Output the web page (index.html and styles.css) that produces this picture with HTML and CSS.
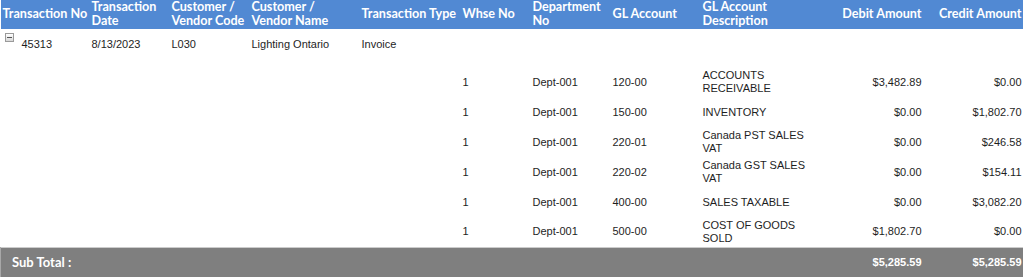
FILE: index.html
```html
<!DOCTYPE html>
<html>
<head>
<meta charset="utf-8">
<link rel="stylesheet" href="styles.css">
</head>
<body>
<table class="grid">
  <colgroup>
    <col class="c1"><col class="c2"><col class="c3"><col class="c4"><col class="c5"><col class="c6"><col class="c7"><col class="c8"><col class="c9"><col class="c10"><col class="c11">
  </colgroup>
  <thead>
    <tr class="head">
      <th><div class="hc">Transaction No</div></th>
      <th><div class="hc">Transaction<br>Date</div></th>
      <th><div class="hc">Customer /<br>Vendor Code</div></th>
      <th><div class="hc">Customer /<br>Vendor Name</div></th>
      <th><div class="hc">Transaction Type</div></th>
      <th><div class="hc">Whse No</div></th>
      <th><div class="hc">Department<br>No</div></th>
      <th><div class="hc">GL Account</div></th>
      <th><div class="hc">GL Account<br>Description</div></th>
      <th class="num"><div class="hc">Debit Amount</div></th>
      <th class="num"><div class="hc">Credit Amount</div></th>
    </tr>
  </thead>
  <tbody>
    <tr class="main">
      <td class="first"><span class="toggle"></span>45313</td>
      <td>8/13/2023</td>
      <td>L030</td>
      <td>Lighting Ontario</td>
      <td>Invoice</td>
      <td></td><td></td><td></td><td></td><td></td><td></td>
    </tr>
    <tr class="det">
      <td></td><td></td><td></td><td></td><td></td>
      <td>1</td><td>Dept-001</td><td>120-00</td><td>ACCOUNTS RECEIVABLE</td>
      <td class="num">$3,482.89</td><td class="num">$0.00</td>
    </tr>
    <tr class="det">
      <td></td><td></td><td></td><td></td><td></td>
      <td>1</td><td>Dept-001</td><td>150-00</td><td>INVENTORY</td>
      <td class="num">$0.00</td><td class="num">$1,802.70</td>
    </tr>
    <tr class="det">
      <td></td><td></td><td></td><td></td><td></td>
      <td>1</td><td>Dept-001</td><td>220-01</td><td>Canada PST SALES VAT</td>
      <td class="num">$0.00</td><td class="num">$246.58</td>
    </tr>
    <tr class="det">
      <td></td><td></td><td></td><td></td><td></td>
      <td>1</td><td>Dept-001</td><td>220-02</td><td>Canada GST SALES VAT</td>
      <td class="num">$0.00</td><td class="num">$154.11</td>
    </tr>
    <tr class="det">
      <td></td><td></td><td></td><td></td><td></td>
      <td>1</td><td>Dept-001</td><td>400-00</td><td>SALES TAXABLE</td>
      <td class="num">$0.00</td><td class="num">$3,082.20</td>
    </tr>
    <tr class="det">
      <td></td><td></td><td></td><td></td><td></td>
      <td>1</td><td>Dept-001</td><td>500-00</td><td>COST OF GOODS SOLD</td>
      <td class="num">$1,802.70</td><td class="num">$0.00</td>
    </tr>
  </tbody>
  <tfoot>
    <tr class="sub">
      <td colspan="9" class="sublabel">Sub Total :</td>
      <td class="num">$5,285.59</td>
      <td class="num">$5,285.59</td>
    </tr>
  </tfoot>
</table>
</body>
</html>
```

FILE: styles.css
```css
html, body {
  margin: 0;
  padding: 0;
  background: #ffffff;
}
.grid {
  width: 1022px;
  border-collapse: collapse;
  table-layout: fixed;
  font-family: "Liberation Sans", Arial, sans-serif;
  font-size: 11px;
  color: #1e1e1e;
}
.c1 { width: 89px; }
.c2 { width: 80px; }
.c3 { width: 80px; }
.c4 { width: 110px; }
.c5 { width: 101px; }
.c6 { width: 70px; }
.c7 { width: 80px; }
.c8 { width: 90px; }
.c9 { width: 120px; }
.c10 { width: 102px; }
.c11 { width: 100px; }

.head th {
  background: #5189d3;
  color: #ffffff;
  font-family: Lato, "Open Sans", sans-serif;
  font-weight: 700;
  font-size: 12.6px;
  line-height: 14.5px;
  text-align: left;
  padding: 0 1px 0 2px;
  vertical-align: top;
  white-space: nowrap;
}
.hc {
  height: 29px;
  box-sizing: border-box;
  padding-bottom: 1px;
  display: flex;
  align-items: center;
}
.head th.num .hc {
  justify-content: flex-end;
  text-align: right;
}
td {
  padding: 0 1px 0 2px;
  vertical-align: middle;
  line-height: 13px;
}
.num { text-align: right; }
.main td {
  height: 38px;
  vertical-align: top;
  padding-top: 9px;
  box-sizing: border-box;
}
.main td.first {
  padding-left: 4px;
}
.toggle {
  display: inline-block;
  width: 7px;
  height: 7px;
  border: 1px solid #9a9a9a;
  background: linear-gradient(#ffffff, #d8d8d8);
  position: relative;
  vertical-align: top;
  margin-top: -5px;
  margin-right: 8px;
}
.toggle::after {
  content: "";
  position: absolute;
  left: 1px;
  top: 3px;
  width: 5px;
  height: 1px;
  background: #555555;
}
.det td {
  height: 30px;
  box-sizing: border-box;
}
.sub td {
  background: #7f7f7f;
  color: #ffffff;
  font-weight: 700;
  height: 30px;
  box-sizing: border-box;
  border-top: 1px solid #cccccc;
}
.sub td.sublabel {
  font-family: Lato, "Open Sans", sans-serif;
  font-size: 13px;
  padding-left: 11px;
  border-left: 1px solid #a8a8a8;
}
```
